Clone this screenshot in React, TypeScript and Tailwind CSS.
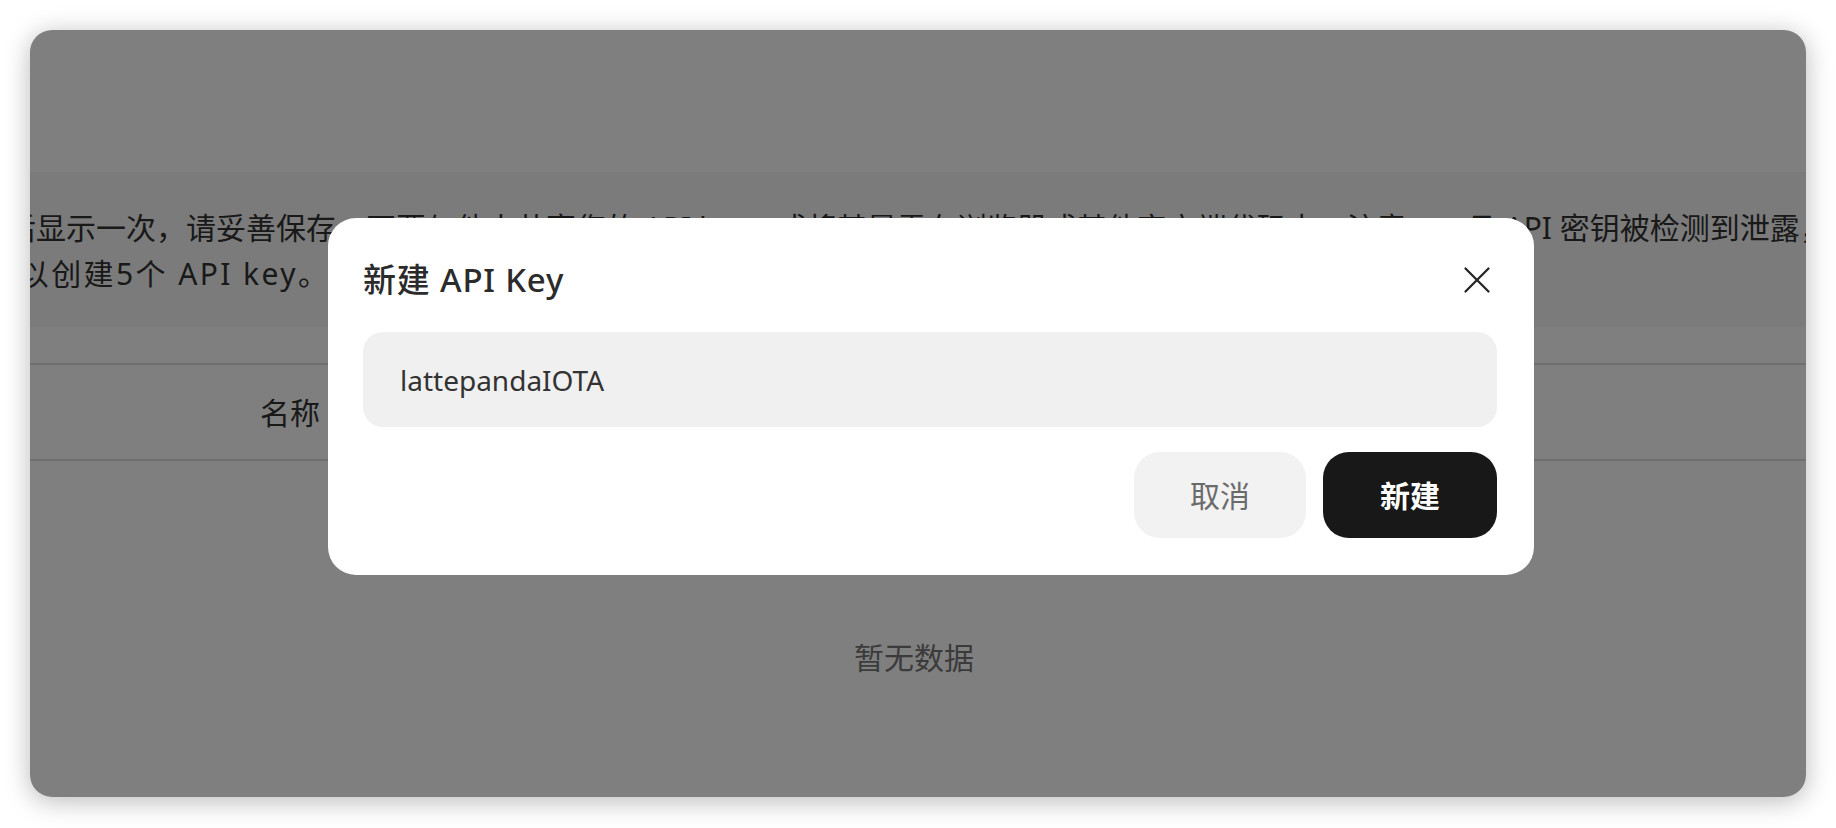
import React from "react";

const CloseIcon: React.FC = () => (
  <svg width="26" height="26" viewBox="0 0 26 26" fill="none">
    <path d="M1.5 1.5L24.5 24.5M24.5 1.5L1.5 24.5" stroke="#222222" strokeWidth="2.2" strokeLinecap="round" />
  </svg>
);

const CreateKeyDialog: React.FC = () => {
  return (
    <div className="w-[1206px] rounded-[28px] bg-white px-[35px] pb-[37px] pt-[42px]">
      <div className="flex h-[40px] items-center justify-between pr-[2px]">
        <h2 className="text-[33px] leading-[40px] font-medium tracking-[0.8px] text-[#2b2b2b]">新建 API Key</h2>
        <button className="flex h-[40px] w-[40px] items-center justify-center">
          <CloseIcon />
        </button>
      </div>
      <div className="mr-[2px] mt-[32px] flex h-[95px] items-center rounded-[20px] bg-[#f0f0f0] pl-[37px]">
        <span className="text-[28px] text-[#333333]">lattepandaIOTA</span>
      </div>
      <div className="mr-[2px] mt-[25px] flex justify-end gap-[17px]">
        <button className="h-[86px] w-[172px] rounded-[26px] bg-[#f2f2f2] text-[30px] text-[#6b6b6b]">取消</button>
        <button className="h-[86px] w-[174px] rounded-[26px] bg-[#181818] text-[30px] font-semibold text-white">新建</button>
      </div>
    </div>
  );
};

export default function App() {
  return (
    <div className="min-h-screen bg-white p-[30px] font-['Noto_Sans','Noto_Sans_CJK_SC',sans-serif]">
      <div className="relative h-[767px] overflow-hidden rounded-[22px] shadow-[0_4px_26px_rgba(0,0,0,0.28)]">
        {/* page behind the modal */}
        <div className="flex h-full flex-col bg-white">
          <div className="h-[142px] shrink-0" />
          <div className="shrink-0 bg-[#f6f6f6] pb-[30px] pt-[33px]">
            <div className="ml-[-209px] whitespace-nowrap text-[30px] leading-[46px] text-[#333333]">
              <div className="pl-[5px]">密钥仅在创建后显示一次，请妥善保存。不要与他人共享您的 API key，或将其暴露在浏览器或其他客户端代码中。注意，一旦 API 密钥被检测到泄露，我们将自动禁用该密钥。</div>
              <div className="ml-[-29px] tracking-[2.4px]">每个账户最多可以创建5个 API key。</div>
            </div>
          </div>
          <div className="mt-[36px] flex h-[98px] shrink-0 items-center border-y-2 border-[#dddddd] pl-[230px]">
            <span className="text-[30px] text-[#333333]">名称</span>
          </div>
          <div className="flex justify-center pr-[8px] pt-[177px]">
            <span className="text-[30px] leading-[40px] text-[#777777]">暂无数据</span>
          </div>
        </div>

        <div className="absolute inset-0 flex items-start justify-center bg-black/50 pl-[26px] pt-[188px]">
          <CreateKeyDialog />
        </div>
      </div>
    </div>
  );
}
